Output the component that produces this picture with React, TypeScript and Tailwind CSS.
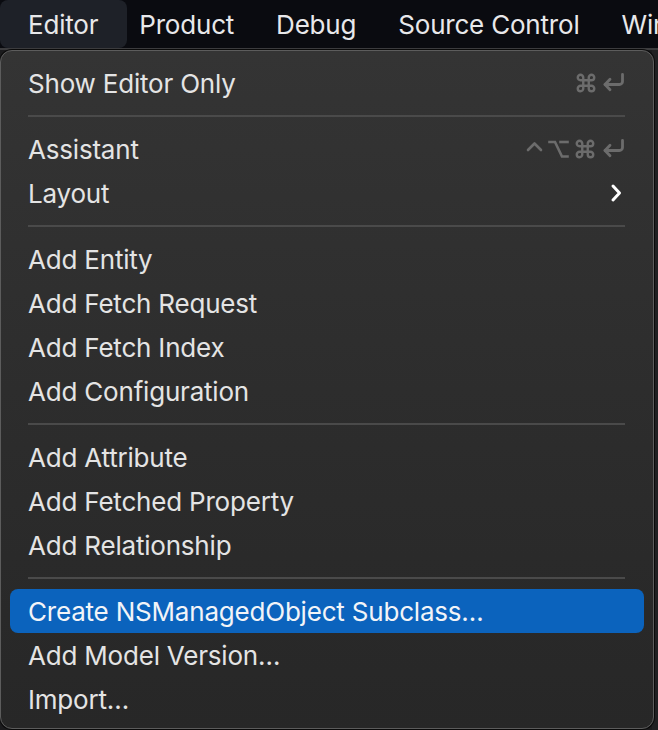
import React from "react";

const Cmd = () => (
  <svg width="22" height="22" viewBox="0 0 24 24" fill="none" stroke="currentColor" strokeWidth="2.6" strokeLinecap="round" strokeLinejoin="round">
    <path d="M15 6v12a3 3 0 1 0 3-3H6a3 3 0 1 0 3 3V6a3 3 0 1 0-3 3h12a3 3 0 1 0-3-3" />
  </svg>
);

const Ret = () => (
  <svg width="24" height="22" viewBox="0 0 24 22" fill="none" stroke="currentColor" strokeWidth="2.8" strokeLinecap="round" strokeLinejoin="round">
    <path d="M21.5 2.5v7a3 3 0 0 1-3 3H4" />
    <path d="M9 7.3l-5 5.2 5 5.2" />
  </svg>
);

const Ctrl = () => (
  <svg width="17" height="22" viewBox="0 0 17 22" fill="none" stroke="currentColor" strokeWidth="2.6" strokeLinecap="round" strokeLinejoin="round">
    <path d="M2 12l6.5-6.5L15 12" />
  </svg>
);

const Opt = () => (
  <svg width="21" height="22" viewBox="0 0 21 22" fill="none" stroke="currentColor" strokeWidth="2.6" strokeLinecap="square" strokeLinejoin="miter">
    <path d="M1.5 4h5.5l7 14.5h5.5" />
    <path d="M12.5 4h7" />
  </svg>
);

const Chevron = () => (
  <svg width="12" height="22" viewBox="0 0 12 22" fill="none" stroke="currentColor" strokeWidth="3" strokeLinecap="round" strokeLinejoin="round">
    <path d="M3 4l6.5 7L3 18" />
  </svg>
);

type Item = { label: string; shortcut?: React.ReactNode; highlighted?: boolean };

const Row = ({ label, shortcut, highlighted }: Item) => (
  <div
    className={
      "flex h-[44px] items-center justify-between rounded-[8px] pl-[18px] pr-[19px] " +
      (highlighted ? "bg-[#0b63bd] text-[#f2f4f8]" : "text-[#e4e4e4]")
    }
  >
    <span className="whitespace-nowrap">{label}</span>
    {shortcut}
  </div>
);

const Sep = () => (
  <div className="flex h-[22px] items-center pl-[18px] pr-[19px]">
    <div className="h-[2px] w-full bg-[#4a4a4a]" />
  </div>
);

export default function App() {
  const font = { fontFamily: "Inter, 'Noto Sans', sans-serif" } as React.CSSProperties;
  return (
    <div className="relative h-[730px] w-[658px] overflow-hidden bg-[#1b1b1d]" style={font}>
      <div className="flex h-[48px] items-stretch overflow-hidden whitespace-nowrap bg-[#0a0b10] text-[26px] text-[#e8e8ea]">
        <div className="flex shrink-0 items-center rounded-lg bg-[#1e2128] pl-[28px] pr-[29px] tracking-[-0.2px]">Editor</div>
        <div className="ml-[12px] flex shrink-0 items-center gap-[42px] tracking-[-0.2px]">
          <span>Product</span>
          <span>Debug</span>
          <span>Source Control</span>
          <span>Window</span>
        </div>
      </div>
      <div className="h-[2px] bg-[#3c3c3e]" />
      <div className="absolute right-0 top-[50px] h-[680px] w-[6px] bg-[#202022]">
        <div className="mt-[70px] h-[40px] w-[2px] bg-[#5a5a5a]" />
      </div>
      <div className="absolute left-0 top-[50px] h-[679px] w-[654px] rounded-[12px] border border-[#5c5c5c] bg-gradient-to-b from-[#343434] via-[#2d2d2d] to-[#272727] px-[9px] pt-[10px] text-[26px] tracking-[-0.2px] shadow-[0_0_0_1px_#0a0a0a]">
        <Row
          label="Show Editor Only"
          shortcut={
            <span className="flex items-center gap-[4px] text-[#6c6c6c]">
              <Cmd />
              <Ret />
            </span>
          }
        />
        <Sep />
        <Row
          label="Assistant"
          shortcut={
            <span className="flex items-center gap-[5px] text-[#6c6c6c]">
              <Ctrl />
              <Opt />
              <Cmd />
              <Ret />
            </span>
          }
        />
        <Row
          label="Layout"
          shortcut={
            <span className="mr-[3px] flex items-center text-white">
              <Chevron />
            </span>
          }
        />
        <Sep />
        <Row label="Add Entity" />
        <Row label="Add Fetch Request" />
        <Row label="Add Fetch Index" />
        <Row label="Add Configuration" />
        <Sep />
        <Row label="Add Attribute" />
        <Row label="Add Fetched Property" />
        <Row label="Add Relationship" />
        <Sep />
        <Row label="Create NSManagedObject Subclass…" highlighted />
        <Row label="Add Model Version…" />
        <Row label="Import…" />
      </div>
    </div>
  );
}
